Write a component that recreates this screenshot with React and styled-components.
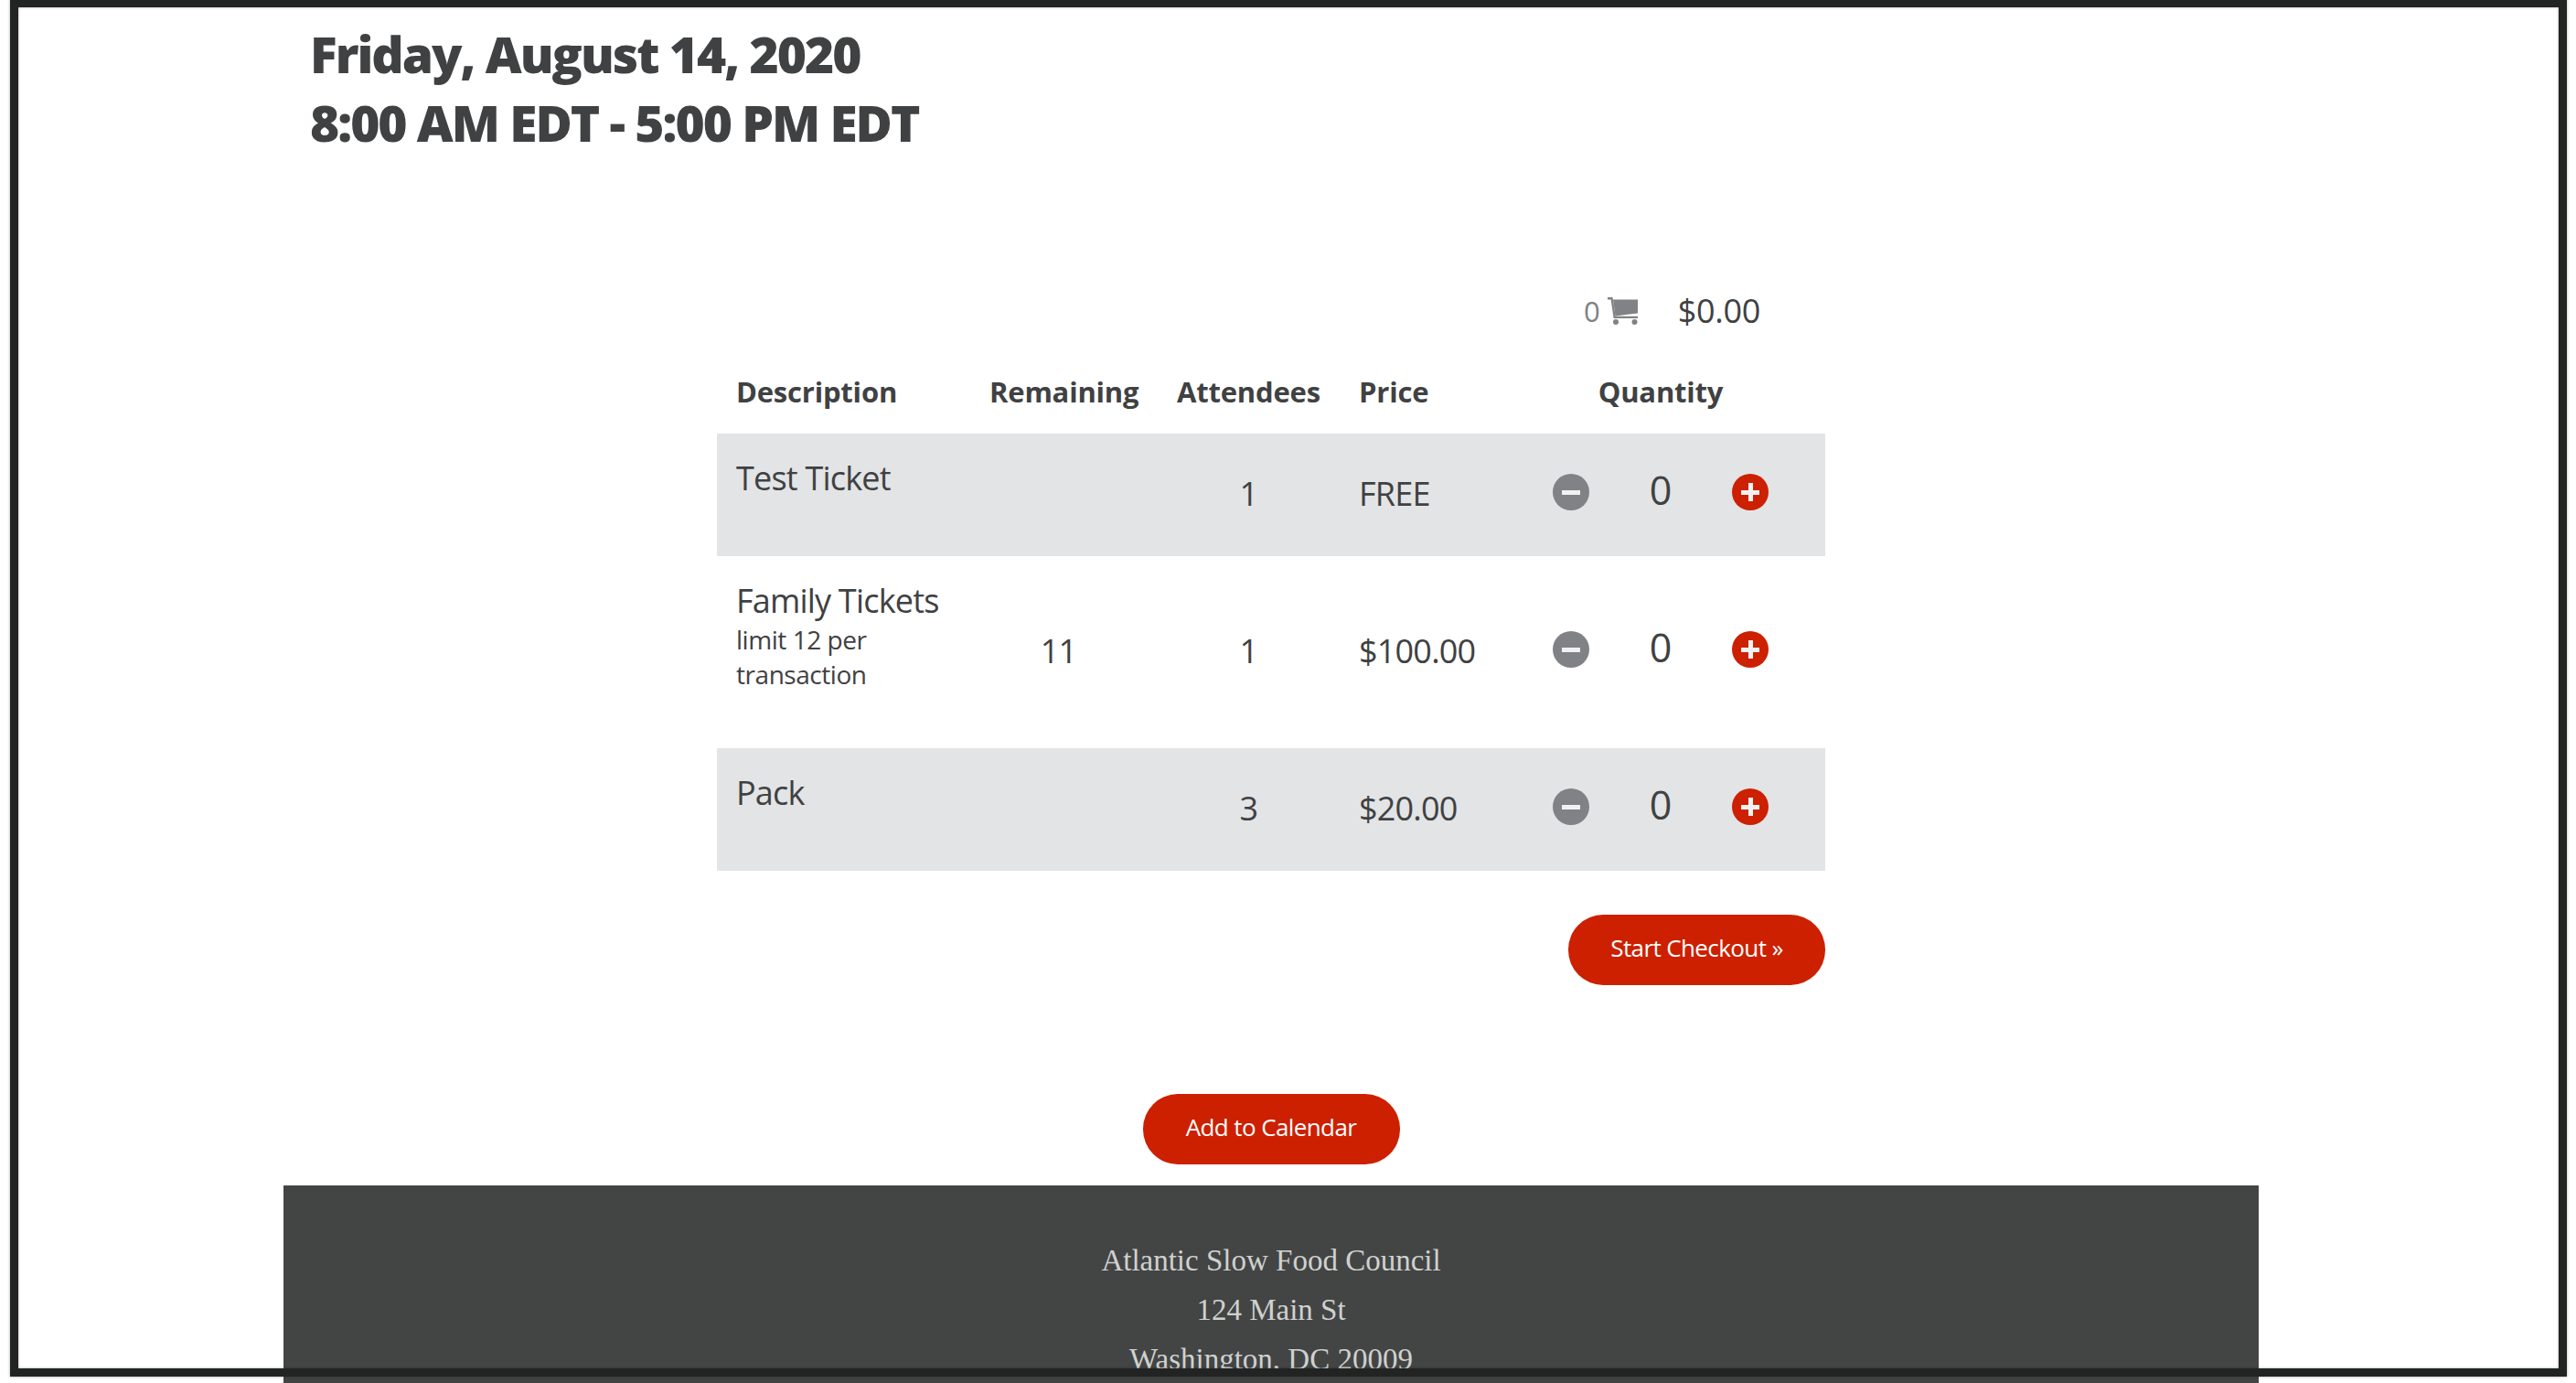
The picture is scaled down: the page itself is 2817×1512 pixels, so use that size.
import React from "react";
import styled, { createGlobalStyle } from "styled-components";

const GlobalStyle = createGlobalStyle`
  html, body {
    margin: 0;
    height: 1512px;
    overflow: hidden;
    background: #fff;
  }
  body {
    font-family: "Open Sans", "Noto Sans", sans-serif;
    color: #404142;
  }
`;

const Page = styled.div`
  width: 2160px;
  margin-left: 310px;
`;

const Title = styled.h1`
  margin: 0;
  padding: 21px 29px 0;
  font-size: 55px;
  line-height: 75px;
  font-weight: 800;
  letter-spacing: -2px;
  color: #404142;
`;

const Tickets = styled.section`
  width: 1212px;
  margin: 144px auto 0;
`;

const CartBar = styled.div`
  display: flex;
  justify-content: flex-end;
  align-items: center;
  height: 50px;
  margin-bottom: 17px;
  padding-right: 71px;
`;

const CartCount = styled.span`
  font-size: 31px;
  color: #808285;
  margin-right: 8px;
`;

const CartTotal = styled.span`
  font-size: 36px;
  letter-spacing: -0.3px;
  margin-left: 44px;
  margin-top: -2px;
`;

const Row = styled.div`
  display: grid;
  grid-template-columns: 277px 205px 199px 171px 360px;
  align-items: center;
  height: ${(p) => p.$height}px;
  background: ${(p) => (p.$shaded ? "#e3e4e6" : "transparent")};
`;

const HeadCell = styled.div`
  font-size: 31px;
  font-weight: 700;
  letter-spacing: -0.2px;
  padding-left: ${(p) => (p.$center ? 0 : 21)}px;
  text-align: ${(p) => (p.$center ? "center" : "left")};
`;

const NameCell = styled.div`
  align-self: start;
  padding: 24px 0 0 21px;
  font-size: 36px;
  letter-spacing: -0.8px;
  line-height: 50px;
`;

const Note = styled.div`
  margin-top: -1px;
  font-size: 28px;
  letter-spacing: -0.45px;
  line-height: 37.5px;
`;

const Cell = styled.div`
  font-size: 36px;
  letter-spacing: -0.8px;
  margin-top: -4px;
  padding-left: ${(p) => (p.$center ? 0 : 21)}px;
  padding-right: ${(p) => p.$shift || 0}px;
  text-align: ${(p) => (p.$center ? "center" : "left")};
`;

const Stepper = styled.div`
  display: grid;
  grid-template-columns: 40px 1fr 40px;
  align-items: center;
  justify-items: center;
  padding: 0 62px;
  margin-top: -6px;
`;

const StepValue = styled.span`
  font-size: 43px;
  line-height: 50px;
  margin-top: -5px;
`;

const StepButton = styled.button`
  position: relative;
  width: 40px;
  height: 40px;
  padding: 0;
  border: 0;
  border-radius: 50%;
  background: ${(p) => (p.$plus ? "#cc2000" : "#808285")};

  &::before {
    content: "";
    position: absolute;
    left: 10px;
    top: 17.5px;
    width: 20px;
    height: 5px;
    background: #f1f1f1;
  }

  &::after {
    content: "";
    display: ${(p) => (p.$plus ? "block" : "none")};
    position: absolute;
    left: 17.5px;
    top: 10px;
    width: 5px;
    height: 20px;
    background: #f1f1f1;
  }
`;

const PillButton = styled.a`
  display: flex;
  align-items: center;
  justify-content: center;
  box-sizing: border-box;
  width: 281px;
  height: 77px;
  padding-bottom: 6px;
  border-radius: 38px;
  background: #cc2000;
  color: #fff;
  font-size: 26px;
  letter-spacing: -0.6px;
  text-decoration: none;
`;

const CheckoutBar = styled.div`
  display: flex;
  justify-content: flex-end;
  margin-top: 48px;
`;

const CalendarBar = styled.div`
  display: flex;
  justify-content: center;
  margin-top: 119px;
`;

const Footer = styled.footer`
  box-sizing: border-box;
  height: 216px;
  margin-top: 23px;
  padding-top: 55px;
  overflow: hidden;
  background: #434544;
  color: #cfd1cf;
  font-family: "Liberation Serif", serif;
  font-size: 33px;
  line-height: 54px;
  text-align: center;
`;

const Frame = styled.div`
  position: fixed;
  left: 11px;
  top: -1px;
  width: 2796px;
  height: 1506px;
  box-sizing: border-box;
  border: 9px solid #222323;
  box-shadow: 0 0 3px rgba(0, 0, 0, 0.35), inset 0 0 3px rgba(0, 0, 0, 0.35);
  pointer-events: none;
`;

const tickets = [
  { name: "Test Ticket", attendees: "1", price: "FREE", height: 134, shaded: true },
  { name: "Family Tickets", note: "limit 12 per transaction", remaining: "11", attendees: "1", price: "$100.00", height: 210 },
  { name: "Pack", attendees: "3", price: "$20.00", height: 134, shaded: true },
];

function CartIcon() {
  return (
    <svg width="33" height="30" viewBox="0 0 33 30" fill="#808285">
      <path d="M0 0h5.5L8.7 20.8H33V23H6.6L3.6 2.4H0z" />
      <path d="M6 2.5H33V17.5L8.5 20.5z" />
      <circle cx="9" cy="27" r="3" />
      <circle cx="29.5" cy="27" r="3" />
    </svg>
  );
}

export default function App() {
  return (
    <>
      <GlobalStyle />
      <Page>
        <Title>
          Friday, August 14, 2020
          <br />
          8:00 AM EDT - 5:00 PM EDT
        </Title>
        <Tickets>
          <CartBar>
            <CartCount>0</CartCount>
            <CartIcon />
            <CartTotal>$0.00</CartTotal>
          </CartBar>
          <Row $height={92}>
            <HeadCell>Description</HeadCell>
            <HeadCell>Remaining</HeadCell>
            <HeadCell>Attendees</HeadCell>
            <HeadCell>Price</HeadCell>
            <HeadCell $center>Quantity</HeadCell>
          </Row>
          {tickets.map((t) => (
            <Row key={t.name} $height={t.height} $shaded={t.shaded}>
              <NameCell>
                {t.name}
                {t.note && <Note>{t.note}</Note>}
              </NameCell>
              <Cell $center $shift={12}>{t.remaining}</Cell>
              <Cell $center>{t.attendees}</Cell>
              <Cell>{t.price}</Cell>
              <Stepper>
                <StepButton aria-label="Remove" />
                <StepValue>0</StepValue>
                <StepButton $plus aria-label="Add" />
              </Stepper>
            </Row>
          ))}
          <CheckoutBar>
            <PillButton href="#">Start Checkout »</PillButton>
          </CheckoutBar>
        </Tickets>
        <CalendarBar>
          <PillButton href="#">Add to Calendar</PillButton>
        </CalendarBar>
        <Footer>
          <div>Atlantic Slow Food Council</div>
          <div>124 Main St</div>
          <div>Washington, DC 20009</div>
        </Footer>
      </Page>
      <Frame />
    </>
  );
}
